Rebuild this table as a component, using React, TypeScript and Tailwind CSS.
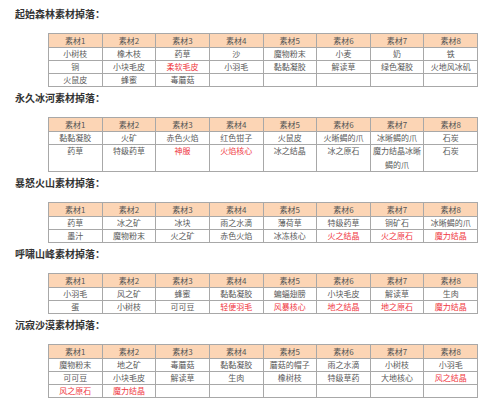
import React from 'react'

type Cell = string | { text: string; red?: boolean; lines?: string[] }

interface Section {
  title: string
  rows: Cell[][]
  tallRow?: number
}

const r = (text: string): Cell => ({ text, red: true })

const sections: Section[] = [
  {
    title: '起始森林素材掉落：',
    rows: [
      ['小树枝', '橡木枝', '药草', '沙', '魔物粉末', '小麦', '奶', '铁'],
      ['铜', '小块毛皮', r('柔软毛皮'), '小羽毛', '黏黏凝胶', '解读草', '绿色凝胶', '火地风冰矶'],
      ['火鼠皮', '蜂蜜', '毒蘑菇', '', '', '', '', ''],
    ],
  },
  {
    title: '永久冰河素材掉落：',
    rows: [
      ['黏黏凝胶', '火矿', '赤色火焰', '红色钳子', '火鼠皮', '火晰蝎的爪', '冰晰蝎的爪', '石炭'],
      [
        '药草',
        '特级药草',
        r('神服'),
        r('火焰核心'),
        '冰之结晶',
        '冰之原石',
        { text: '魔力结晶冰晰蝎的爪', lines: ['魔力结晶冰晰', '蝎的爪'] },
        '石炭',
      ],
    ],
    tallRow: 1,
  },
  {
    title: '暴怒火山素材掉落：',
    rows: [
      ['药草', '冰之矿', '冰块', '雨之水滴', '薄荷草', '特级药草', '铜矿石', '冰晰蝎的爪'],
      ['墨汁', '魔物粉末', '火之矿', '赤色火焰', '冰冻核心', r('火之结晶'), r('火之原石'), r('魔力结晶')],
    ],
  },
  {
    title: '呼啸山峰素材掉落：',
    rows: [
      ['小羽毛', '风之矿', '蜂蜜', '黏黏凝胶', '蝙蝠翅膀', '小块毛皮', '解读草', '生肉'],
      ['蛋', '小树枝', '可可豆', r('轻便羽毛'), r('风暴核心'), r('地之结晶'), r('地之原石'), r('魔力结晶')],
    ],
  },
  {
    title: '沉寂沙漠素材掉落：',
    rows: [
      ['魔物粉末', '地之矿', '毒蘑菇', '黏黏凝胶', '蘑菇的帽子', '雨之水滴', '小树枝', '小羽毛'],
      ['可可豆', '小块毛皮', '解读草', '生肉', '橡树枝', '特级草药', '大地核心', r('风之结晶')],
      [r('风之原石'), r('魔力结晶'), '', '', '', '', '', ''],
    ],
  },
]

const headers = ['素材1', '素材2', '素材3', '素材4', '素材5', '素材6', '素材7', '素材8']

function DropTable({ section }: { section: Section }) {
  return (
    <table className="ml-[48px] mt-[12px] w-[430px] table-fixed border-collapse text-[8px]">
      <thead>
        <tr>
          {headers.map(h => (
            <th
              key={h}
              className="h-[14px] border border-[#a8a8a8] bg-[#fcd5b5] p-0 text-center font-normal leading-[13px] text-[#555]"
            >
              {h}
            </th>
          ))}
        </tr>
      </thead>
      <tbody>
        {section.rows.map((row, i) => (
          <tr key={i}>
            {row.map((cell, j) => {
              const c = typeof cell === 'string' ? { text: cell } : cell
              const tall = section.tallRow === i
              return (
                <td
                  key={j}
                  className={`border border-[#a8a8a8] p-0 text-center align-top leading-[12px] ${
                    tall ? 'h-[27px]' : 'h-[13px]'
                  } ${c.red ? 'text-[#f0383f]' : 'text-[#5a5a5a]'}`}
                >
                  {c.lines ? (
                    c.lines.map((l, k) => (
                      <div key={k} className={k > 0 ? 'mt-[2px]' : ''}>
                        {l}
                      </div>
                    ))
                  ) : (
                    c.text
                  )}
                </td>
              )
            })}
          </tr>
        ))}
      </tbody>
    </table>
  )
}

export default function App() {
  return (
    <div
      className="h-[400px] w-[490px] overflow-hidden bg-white pt-[3px]"
      style={{ fontFamily: '"Noto Sans CJK SC", "Noto Sans", sans-serif' }}
    >
      {sections.map(s => (
        <div key={s.title}>
          <div className="ml-[15px] mt-[4px] h-[14px] text-[10px] font-bold leading-[14px] text-[#333]">
            {s.title}
          </div>
          <DropTable section={s} />
        </div>
      ))}
    </div>
  )
}
